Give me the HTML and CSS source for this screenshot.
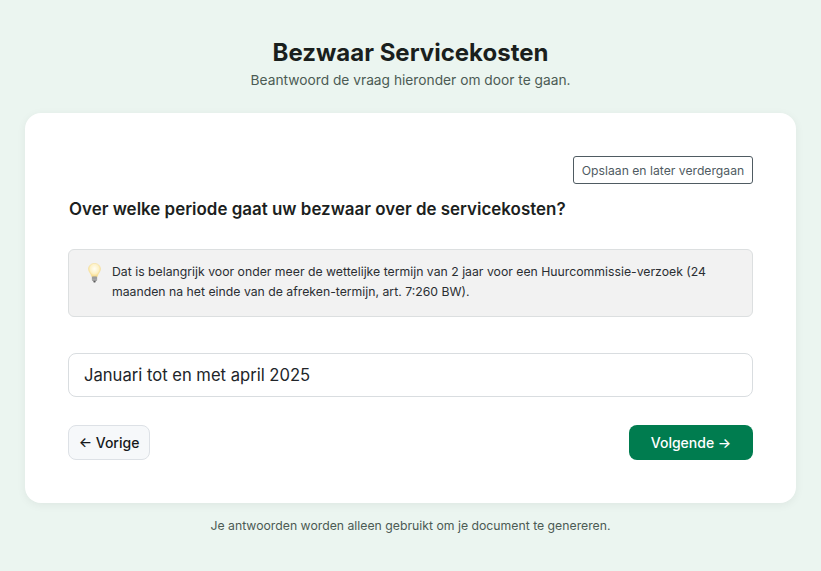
FILE: index.html
```html
<!DOCTYPE html>
<html lang="nl">
<head>
  <meta charset="UTF-8">
  <meta name="viewport" content="width=device-width, initial-scale=1.0">
  <title>Bezwaar Servicekosten</title>
  <link rel="stylesheet" href="styles.css">
</head>
<body>
  <header class="page-header">
    <h1>Bezwaar Servicekosten</h1>
    <p>Beantwoord de vraag hieronder om door te gaan.</p>
  </header>

  <main class="card">
    <div class="save-row">
      <button class="save-button">Opslaan en later verdergaan</button>
    </div>
    <h2 class="question">Over welke periode gaat uw bezwaar over de servicekosten?</h2>

    <div class="hint">
      <svg class="hint-icon" width="13" height="20" viewBox="0 0 13 20">
        <defs>
          <radialGradient id="glass" cx="50%" cy="40%" r="60%">
            <stop offset="0" stop-color="#fffef5"/>
            <stop offset="0.6" stop-color="#fdf1c6"/>
            <stop offset="1" stop-color="#f7d77e"/>
          </radialGradient>
        </defs>
        <path d="M6.500 .4C3 .4 .5 2.900 .5 6c0 2.800 2.600 4.500 3.300 7.800h5.400C9.900 10.500 12.500 8.800 12.500 6 12.500 2.900 10 .4 6.500 .4z" fill="url(#glass)" stroke="#f5dc92" stroke-width=".5"/>
        <rect x="3.900" y="13.600" width="5.200" height="4.200" rx=".9" fill="#8f8f8f"/>
        <path d="M3.900 15h5.200M3.900 16.400h5.200" stroke="#c8c8c8" stroke-width=".5"/>
        <path d="M5.200 17.800h2.600l-.5 1.600H5.700z" fill="#5a5a5a"/>
      </svg>
      <p>Dat is belangrijk voor onder meer de wettelijke termijn van 2 jaar voor een Huurcommissie-verzoek (24 maanden na het einde van de afreken-termijn, art. 7:260 BW).</p>
    </div>

    <input class="answer" type="text" value="Januari tot en met april 2025">

    <div class="nav-row">
      <button class="prev-button">← Vorige</button>
      <button class="next-button">Volgende →</button>
    </div>
  </main>

  <footer class="page-footer">Je antwoorden worden alleen gebruikt om je document te genereren.</footer>
</body>
</html>
```

FILE: styles.css
```css
* {
  box-sizing: border-box;
}
body {
  font-family: Inter, "Liberation Sans", sans-serif;
  background-color: #ebf5f0;
  color: #1a1f1d;
  margin: 0;
  height: 571px;
  overflow: hidden;
  padding: 38px 25px 0;
}
.page-header {
  text-align: center;
  margin-bottom: 24px;
}
.page-header h1 {
  font-size: 24px;
  line-height: 29px;
  font-weight: 700;
  margin: 0 0 5px;
}
.page-header p {
  font-size: 13.75px;
  line-height: 17px;
  color: #4b5b54;
  margin: 0;
}
.card {
  background: white;
  border-radius: 16px;
  height: 390px;
  padding: 43px 43px 0;
  box-shadow: 0 2px 10px rgba(0, 0, 0, 0.06);
}
.save-row {
  display: flex;
  justify-content: flex-end;
}
.save-button {
  font: inherit;
  font-size: 12.2px;
  height: 28px;
  width: 180px;
  padding: 0;
  color: #4f5b62;
  background: white;
  border: 1px solid #4f5b62;
  border-radius: 3px;
}
.question {
  font-size: 16.95px;
  line-height: 21px;
  font-weight: 600;
  margin: 15px 0 29px;
  padding-left: 1px;
  color: #1c1f1e;
}
.hint {
  display: flex;
  background: #f2f2f2;
  border: 1px solid #dcdfe0;
  border-radius: 6px;
  height: 68px;
  padding: 12px 16px 0 19px;
  margin-bottom: 36px;
}
.hint-icon {
  flex: none;
  margin: 1px 11px 0 0;
}
.hint p {
  font-size: 12.25px;
  line-height: 20px;
  color: #2a2e32;
  margin: 0;
}
.answer {
  display: block;
  width: 100%;
  height: 44px;
  font: inherit;
  font-size: 16.6px;
  color: #212529;
  padding: 0 15px;
  border: 1px solid #d9dde0;
  border-radius: 8px;
  margin-bottom: 28px;
}
.nav-row {
  display: flex;
  justify-content: space-between;
}
.prev-button {
  font: inherit;
  font-size: 14px;
  font-weight: 450;
  width: 82px;
  height: 35px;
  color: #15181a;
  background: #f6f8fa;
  border: 1px solid #dde1e6;
  border-radius: 8px;
}
.next-button {
  font: inherit;
  font-size: 14px;
  font-weight: 450;
  width: 124px;
  height: 35px;
  color: white;
  background: #007c4f;
  border: none;
  border-radius: 8px;
}
.page-footer {
  text-align: center;
  font-size: 12.25px;
  line-height: 15px;
  color: #4b5b54;
  margin-top: 15px;
}
```
